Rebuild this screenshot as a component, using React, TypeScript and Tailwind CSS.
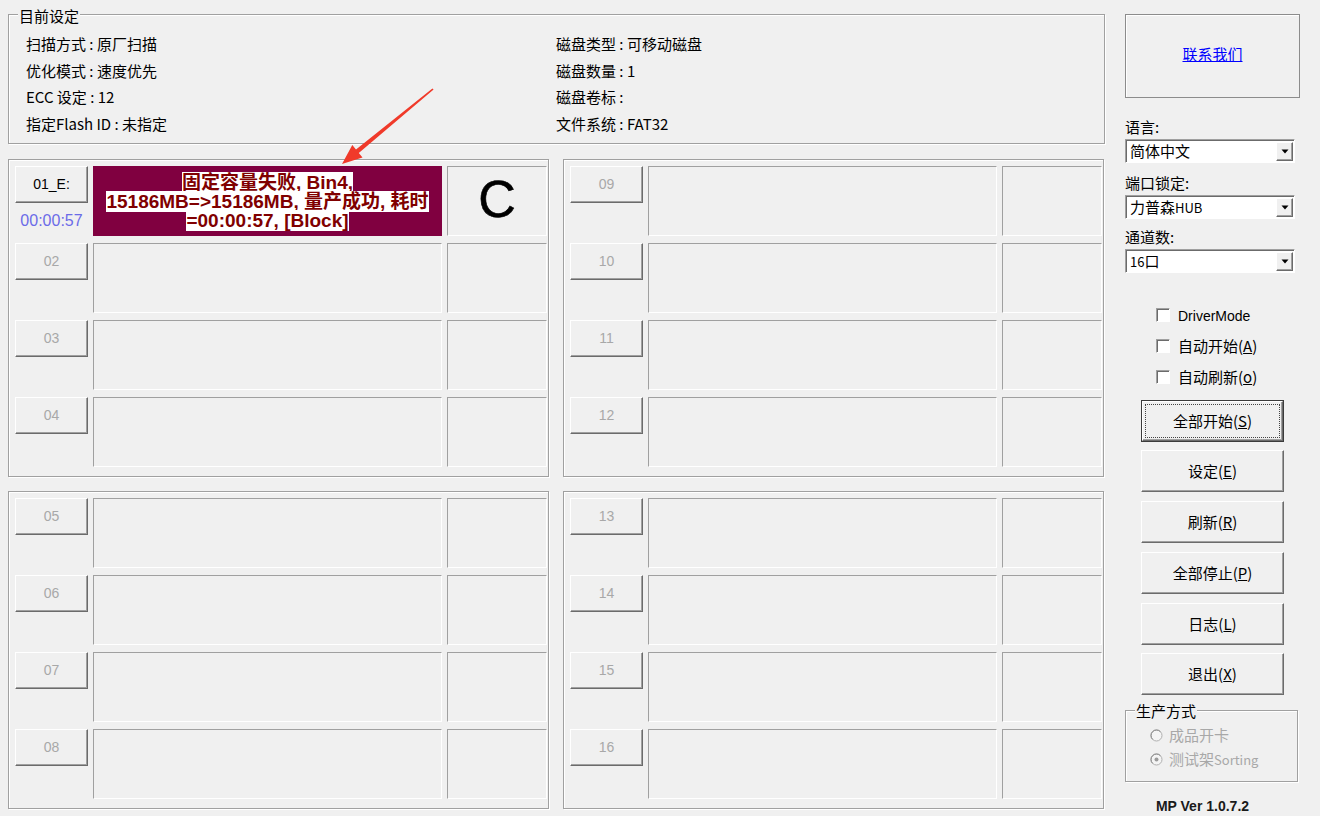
import React from "react";

const cjk = "font-['Noto_Sans_CJK_SC','Liberation_Sans',sans-serif]";
const latin = "font-['Liberation_Sans','Noto_Sans_CJK_SC',sans-serif]";

const bevel =
  "border border-t-white border-l-white border-r-[#6b6b6b] border-b-[#6b6b6b] shadow-[inset_-1px_-1px_0_#a0a0a0]";
const sunken =
  "border border-t-[#a0a0a0] border-l-[#a0a0a0] border-r-white border-b-white";
const etched = "border border-[#a0a0a0] shadow-[inset_1px_1px_0_#ffffff,1px_1px_0_#ffffff]";

function Slot({ label, active }: { label: string; active?: boolean }) {
  return (
    <div className="flex h-[70px] gap-[5px]">
      <div className="flex w-[73px] flex-col">
        <div
          className={`${bevel} ${latin} flex h-[37px] items-center justify-center bg-[#f0f0f0] text-[14px] ${
            active ? "text-black" : "text-[#a8a8a8]"
          }`}
        >
          {label}
        </div>
        {active && (
          <div className={`${latin} mt-[8px] text-center text-[16px] leading-[20px] text-[#6b6be8]`}>
            00:00:57
          </div>
        )}
      </div>
      {active ? (
        <div className="flex w-[349px] flex-col items-center justify-center bg-[#800040]">
          {["固定容量失败, Bin4,", "15186MB=>15186MB, 量产成功, 耗时", "=00:00:57, [Block]"].map((t) => (
            <div key={t} className={`${latin} text-[19px] font-bold leading-[19px] text-[#800000]`}>
              <span className="bg-white">{t}</span>
            </div>
          ))}
        </div>
      ) : (
        <div className={`w-[349px] ${sunken}`} />
      )}
      <div className={`flex w-[100px] items-center justify-center ${sunken}`}>
        {active && (
          <span className={`${latin} -mt-[4px] text-[52px] leading-none text-black [-webkit-text-stroke:0.6px_#000]`}>
            C
          </span>
        )}
      </div>
    </div>
  );
}

function Panel({ labels, first }: { labels: string[]; first?: boolean }) {
  return (
    <div className={`${etched} flex h-[318px] flex-col gap-[7px] pl-[6px] pt-[6px]`}>
      {labels.map((l, i) => (
        <Slot key={l} label={l} active={first && i === 0} />
      ))}
    </div>
  );
}

function Select({ children }: { children: React.ReactNode }) {
  return (
    <div
      className={`flex h-[24px] w-[170px] items-center bg-white border border-t-[#a0a0a0] border-l-[#a0a0a0] border-r-white border-b-white shadow-[inset_1px_1px_0_#6b6b6b]`}
    >
      <span className={`${cjk} flex-1 pl-[4px] text-[15px] leading-[20px] text-black`}>{children}</span>
      <div className={`${bevel} mr-[1px] flex h-[19px] w-[17px] items-center justify-center bg-[#f0f0f0]`}>
        <svg width="8" height="5" viewBox="0 0 8 5">
          <path d="M0.5 0.5h7L4 4.5z" fill="#000" />
        </svg>
      </div>
    </div>
  );
}

function Check({ children }: { children: React.ReactNode }) {
  return (
    <div className="flex h-[20px] items-center pl-[31px]">
      <div className="h-[14px] w-[14px] bg-white border border-t-[#a0a0a0] border-l-[#a0a0a0] border-r-white border-b-white shadow-[inset_1px_1px_0_#6b6b6b]" />
      <span className={`${cjk} ml-[8px] text-[15px] leading-[20px] text-black`}>{children}</span>
    </div>
  );
}

function Btn({ children, focus, mt }: { children: React.ReactNode; focus?: boolean; mt: string }) {
  if (focus) {
    return (
      <div className={`${mt} ml-[16px] h-[42px] w-[143px] border border-[#3a3a3a]`}>
        <div className={`${bevel} flex h-full w-full bg-[#f0f0f0] p-[2px]`}>
          <div className="flex flex-1 items-center justify-center border border-dotted border-[#444]">
            <span className={`${cjk} text-[15px] leading-[20px] text-black`}>{children}</span>
          </div>
        </div>
      </div>
    );
  }
  return (
    <div className={`${mt} ${bevel} ml-[16px] flex h-[42px] w-[143px] items-center justify-center bg-[#f0f0f0]`}>
      <span className={`${cjk} text-[15px] leading-[20px] text-black`}>{children}</span>
    </div>
  );
}

function Radio({ checked, children }: { checked?: boolean; children: React.ReactNode }) {
  return (
    <div className="flex h-[22px] items-center pl-[24px]">
      <svg width="13" height="13" viewBox="0 0 13 13">
        <circle cx="6.5" cy="6.5" r="5.5" fill="#f4f4f4" stroke="#b0b0b0" strokeWidth="1" />
        <path d="M2.6 10.4A5.5 5.5 0 0 1 10.4 2.6" fill="none" stroke="#8a8a8a" strokeWidth="1" />
        {checked && <circle cx="6.5" cy="6.5" r="2" fill="#9a9a9a" />}
      </svg>
      <span className={`${cjk} ml-[6px] text-[15px] leading-[20px] text-[#a8a8a8]`}>{children}</span>
    </div>
  );
}

export default function App() {
  const info = [
    ["扫描方式 : 原厂扫描", "磁盘类型 : 可移动磁盘"],
    ["优化模式 : 速度优先", "磁盘数量 : 1"],
    ["ECC 设定 : 12", "磁盘卷标 :"],
    ["指定Flash ID : 未指定", "文件系统 : FAT32"],
  ];
  return (
    <div className={`relative flex h-[816px] w-[1320px] overflow-hidden bg-[#f0f0f0] pl-[8px] ${cjk}`}>
      {/* Left column */}
      <div className="flex w-[1097px] flex-col">
        <div className={`${etched} relative mt-[14px] h-[130px] pl-[17px] pt-[16px]`}>
          <span className={`${cjk} absolute left-[9px] top-[-9px] bg-[#f0f0f0] px-[1px] text-[15px] leading-[20px] text-black`}>
            目前设定
          </span>
          <div className="grid grid-cols-[530px_1fr]">
            {info.map(([a, b]) => (
              <React.Fragment key={a}>
                <div className="h-[26.5px] text-[15px] leading-[26px] text-black">{a}</div>
                <div className="h-[26.5px] text-[15px] leading-[26px] text-black">{b}</div>
              </React.Fragment>
            ))}
          </div>
        </div>
        <div className="mt-[15px] grid grid-cols-[541px_541px] gap-x-[14px] gap-y-[14px]">
          <Panel labels={["01_E:", "02", "03", "04"]} first />
          <Panel labels={["09", "10", "11", "12"]} />
          <Panel labels={["05", "06", "07", "08"]} />
          <Panel labels={["13", "14", "15", "16"]} />
        </div>
      </div>

      {/* Right column */}
      <div className="ml-[20px] flex w-[175px] flex-col">
        <div className="mt-[14px] flex h-[84px] w-[175px] items-center justify-center border border-[#8c8c8c] shadow-[inset_1px_1px_0_#ffffff]">
          <span className="-mt-[4px] text-[15px] leading-[20px] text-[#0000ff] underline">联系我们</span>
        </div>
        <div className="mt-[20px] h-[18px] text-[15px] leading-[18px] text-black">语言:</div>
        <div className="mt-[3px]">
          <Select>简体中文</Select>
        </div>
        <div className="mt-[11px] h-[18px] text-[15px] leading-[18px] text-black">端口锁定:</div>
        <div className="mt-[3px]">
          <Select>
            力普森<span className="text-[13px]">HUB</span>
          </Select>
        </div>
        <div className="mt-[9px] h-[18px] text-[15px] leading-[18px] text-black">通道数:</div>
        <div className="mt-[3px]">
          <Select>
            <span className="text-[13px]">16</span>口
          </Select>
        </div>

        <div className="mt-[32px] flex flex-col gap-[11px]">
          <Check>
            <span className={`${latin} text-[14px]`}>DriverMode</span>
          </Check>
          <Check>
            自动开始(<u>A</u>)
          </Check>
          <Check>
            自动刷新(<u>o</u>)
          </Check>
        </div>

        <Btn focus mt="mt-[13px]">
          全部开始(<u>S</u>)
        </Btn>
        <Btn mt="mt-[8px]">
          设定(<u>E</u>)
        </Btn>
        <Btn mt="mt-[9px]">
          刷新(<u>R</u>)
        </Btn>
        <Btn mt="mt-[9px]">
          全部停止(<u>P</u>)
        </Btn>
        <Btn mt="mt-[9px]">
          日志(<u>L</u>)
        </Btn>
        <Btn mt="mt-[8px]">
          退出(<u>X</u>)
        </Btn>

        <div className={`${etched} relative mt-[15px] h-[72px] w-[173px] pt-[13px]`}>
          <span className="absolute left-[9px] top-[-10px] bg-[#f0f0f0] px-[1px] text-[15px] leading-[20px] text-black">
            生产方式
          </span>
          <Radio>成品开卡</Radio>
          <div className="mt-[2px]">
            <Radio checked>
              测试架<span className="text-[13px]">Sorting</span>
            </Radio>
          </div>
        </div>
        <div className={`${latin} mt-[16px] w-[155px] text-center text-[14px] font-bold leading-[16px] text-[#1a1a1a]`}>
          MP Ver 1.0.7.2
        </div>
      </div>

      {/* Red annotation arrow */}
      <svg className="pointer-events-none absolute left-0 top-0" width="1320" height="816" viewBox="0 0 1320 816">
        <polygon
          points="432.4,88.4 433.6,89.6 358.8,153.0 362.5,157.5 342,164 352.3,145.1 356.0,149.6"
          fill="#f03a2a"
        />
      </svg>
    </div>
  );
}
